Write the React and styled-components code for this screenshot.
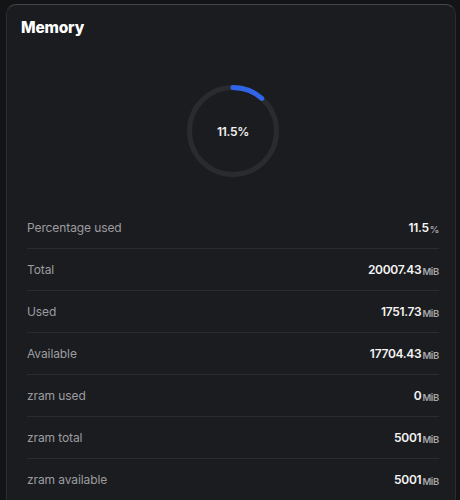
import React from 'react'
import styled, { createGlobalStyle } from 'styled-components'

const GlobalStyle = createGlobalStyle`
  html, body {
    margin: 0;
    padding: 0;
    background: #131416;
    font-family: Inter, "Noto Sans", sans-serif;
    overflow: hidden;
  }
`;

const rows = [
  { label: 'Percentage used', value: '11.5', unit: '%' },
  { label: 'Total', value: '20007.43', unit: 'MiB' },
  { label: 'Used', value: '1751.73', unit: 'MiB' },
  { label: 'Available', value: '17704.43', unit: 'MiB' },
  { label: 'zram used', value: '0', unit: 'MiB' },
  { label: 'zram total', value: '5001', unit: 'MiB' },
  { label: 'zram available', value: '5001', unit: 'MiB' },
];

function Gauge({ percent }) {
  const r = 43.5;
  const c = 2 * Math.PI * r;
  const dash = (percent / 100) * c;
  return (
    <GaugeBox>
      <svg width="96" height="96" viewBox="0 0 96 96">
        <circle cx="48" cy="48" r={r} fill="none" stroke="#2a2b2f" strokeWidth="5" />
        <circle
          cx="48"
          cy="48"
          r={r}
          fill="none"
          stroke="#3065ea"
          strokeWidth="5"
          strokeLinecap="round"
          strokeDasharray={`${dash} ${c}`}
          transform="rotate(-90 48 48)"
        />
      </svg>
      <GaugeLabel>{percent}%</GaugeLabel>
    </GaugeBox>
  );
}

function App() {
  return (
    <Page>
      <GlobalStyle />
      <Card>
        <Header>Memory</Header>
        <ChartArea>
          <Gauge percent={11.5} />
        </ChartArea>
        <List>
          {rows.map((row) => (
            <Row key={row.label}>
              <Label>{row.label}</Label>
              <Value>
                {row.value}
                <Unit>{row.unit}</Unit>
              </Value>
            </Row>
          ))}
        </List>
      </Card>
    </Page>
  );
}

const Page = styled.div`
  padding: 4px 0 0 6px;
  height: 500px;
  box-sizing: border-box;
  overflow: hidden;
`;

const Card = styled.div`
  width: 450px;
  box-sizing: border-box;
  background: #1b1c1f;
  border: 1px solid #2c2d31;
  border-top-color: #46474b;
  border-radius: 10px;
  min-height: 530px;
`;

const Header = styled.h2`
  margin: 0;
  padding: 13px 14px 0;
  height: 30px;
  font-size: 15.5px;
  font-weight: 800;
  color: #ffffff;
  letter-spacing: -0.2px;
`;

const ChartArea = styled.div`
  display: flex;
  justify-content: center;
  padding: 35px 0 28px;
  margin-left: 4px;
`;

const GaugeBox = styled.div`
  position: relative;
  width: 96px;
  height: 96px;
`;

const GaugeLabel = styled.div`
  position: absolute;
  inset: 0;
  display: flex;
  align-items: center;
  justify-content: center;
  color: #f2f2f2;
  font-size: 12px;
  font-weight: 600;
  letter-spacing: -0.3px;
`;

const List = styled.div`
  padding: 0 16px 0 20px;
`;

const Row = styled.div`
  display: flex;
  align-items: center;
  justify-content: space-between;
  height: 41px;
  border-bottom: 1px solid #2b2c30;
`;

const Label = styled.span`
  color: #9b9ca0;
  font-size: 12px;
  letter-spacing: -0.1px;
`;

const Value = styled.span`
  color: #f4f4f4;
  font-size: 12px;
  font-weight: 600;
  letter-spacing: -0.3px;
`;

const Unit = styled.span`
  color: #a6a7ab;
  font-size: 9.5px;
  font-weight: 600;
  margin-left: 1px;
  position: relative;
  top: 1px;
`;

export default App
